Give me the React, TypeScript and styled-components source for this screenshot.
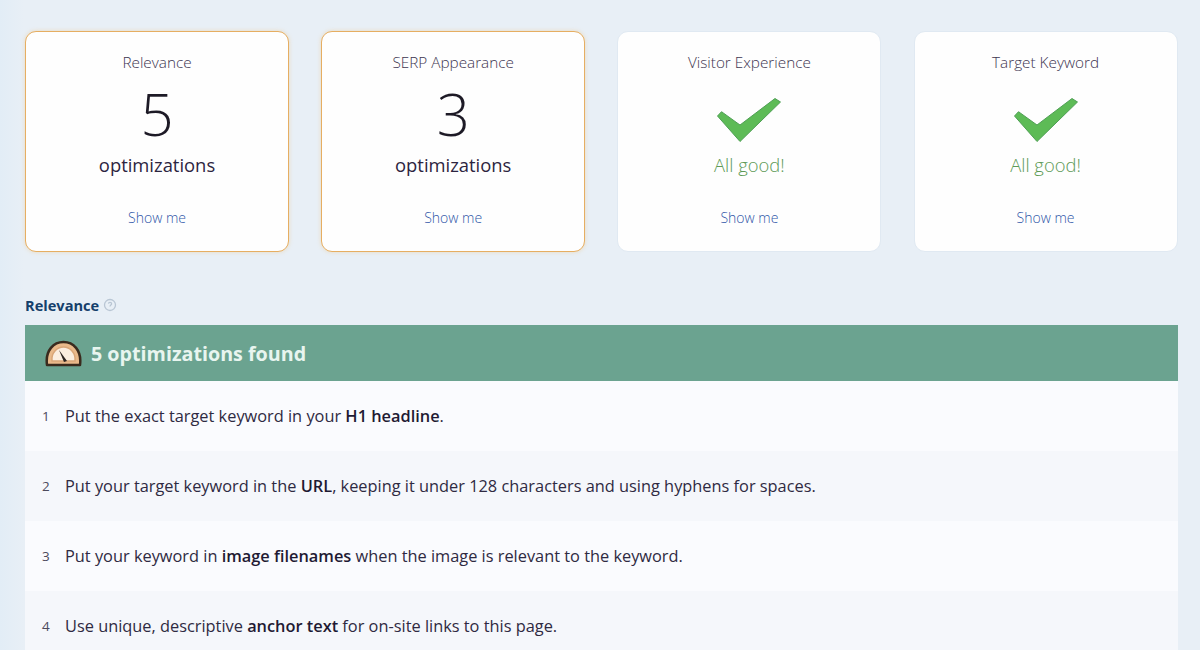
import React from "react"
import styled, { createGlobalStyle } from "styled-components"

const GlobalStyle = createGlobalStyle`
    html, body {
        margin: 0;
        padding: 0;
        height: 650px;
        overflow: hidden;
        background: linear-gradient(90deg, #e2edf6 0, #e8eff6 24px);
        font-family: "Open Sans", "Noto Sans", sans-serif;
    }
`

const Page = styled.div`
    padding: 31px 22px 0 25px;
`

const Cards = styled.div`
    display: grid;
    grid-template-columns: repeat(4, 264px);
    column-gap: 32.2px;
`

const Card = styled.div<{ $warn?: boolean }>`
    height: 221px;
    box-sizing: border-box;
    display: flex;
    flex-direction: column;
    align-items: center;
    padding-top: 21px;
    background-color: #fefefe;
    border-radius: 11px;
    border: ${(p) => (p.$warn ? "1.5px solid #e6ae62" : "1px solid #e0e9f2")};
    box-shadow: ${(p) => (p.$warn ? "0 0 4px rgba(240, 190, 110, 0.4)" : "none")};
`

const CardTitle = styled.div`
    font-size: 15.3px;
    font-weight: 300;
    line-height: 18px;
    color: #3d3550;
`

const Count = styled.div`
    font-size: 58px;
    font-weight: 300;
    line-height: 72px;
    height: 72px;
    margin-top: 7px;
    color: #1d1a26;
`

const CheckBox = styled.div`
    height: 72.5px;
    box-sizing: border-box;
    margin-top: 7px;
    padding-top: 20px;
    display: flex;
    align-items: flex-start;
    justify-content: center;
`

const Status = styled.div<{ $good?: boolean }>`
    font-size: 18.4px;
    font-weight: ${(p) => (p.$good ? 300 : 400)};
    line-height: 24px;
    margin-top: 2.5px;
    color: ${(p) => (p.$good ? "#5d9a56" : "#2c2440")};
`

const ShowMe = styled.a`
    font-size: 14px;
    font-weight: 300;
    line-height: 18px;
    margin-top: 32px;
    color: #2f56a8;
`

const SectionLabel = styled.div`
    display: flex;
    align-items: center;
    gap: 4px;
    margin-top: 44px;
    height: 18px;
    font-size: 14.6px;
    font-weight: 700;
    color: #153f6b;
`

const Banner = styled.div`
    display: flex;
    align-items: center;
    gap: 9px;
    height: 56px;
    margin-top: 11px;
    padding-left: 20px;
    background-color: #6ba390;
    font-size: 19.7px;
    font-weight: 700;
    color: #e8f5ef;
`

const Row = styled.div<{ $shade?: boolean }>`
    display: flex;
    align-items: center;
    height: 70px;
    font-size: 16.35px;
    color: #2f2a42;
    background-color: ${(p) => (p.$shade ? "#f5f7fb" : "#fafbfe")};

    b {
        font-weight: 600;
        color: #1f1a33;
    }
`

const RowNum = styled.span`
    width: 40px;
    padding-left: 17px;
    box-sizing: border-box;
    font-size: 13.5px;
    color: #4c4a5c;
`

const Check = () => (
    <svg width="64" height="44" viewBox="0 0 64 44">
        <path
            d="M0.5 18 L4.5 13.7 L23 27 L58 0.5 L63.5 4 L23 43.5 Z"
            fill="#5dbb56"
            stroke="#4f9f55"
            strokeWidth="1"
            strokeLinejoin="round"
        />
    </svg>
)

const Gauge = () => (
    <svg width="37" height="27" viewBox="0 0 37 27">
        <path d="M2 25 C0 10 9 2 18.5 2 C28 2 37 10 35 25 Z" fill="#e9b98a" stroke="#3a2b1e" strokeWidth="2.5" strokeLinejoin="round" />
        <path d="M7 21 C6 13 12 7 18.5 7 C25 7 31 13 30 21 Z" fill="#fbeee0" stroke="#d9a678" strokeWidth="1.5" />
        <path d="M14 10 L22 21 L19 22 Z" fill="#2b2320" />
    </svg>
)

const HelpIcon = () => (
    <svg width="14" height="14" viewBox="0 0 14 14" fill="none" stroke="#b9c6d4" strokeWidth="1.3">
        <circle cx="7" cy="7" r="5.5" />
        <path d="M5.4 5.6 C5.6 3.9 8.6 4 8.6 5.7 C8.6 7 7 7 7 8.4" />
    </svg>
)

const App = () => {
    return (
        <Page>
            <GlobalStyle />
            <Cards>
                <Card $warn>
                    <CardTitle>Relevance</CardTitle>
                    <Count>5</Count>
                    <Status>optimizations</Status>
                    <ShowMe>Show me</ShowMe>
                </Card>
                <Card $warn>
                    <CardTitle>SERP Appearance</CardTitle>
                    <Count>3</Count>
                    <Status>optimizations</Status>
                    <ShowMe>Show me</ShowMe>
                </Card>
                <Card>
                    <CardTitle>Visitor Experience</CardTitle>
                    <CheckBox>
                        <Check />
                    </CheckBox>
                    <Status $good>All good!</Status>
                    <ShowMe>Show me</ShowMe>
                </Card>
                <Card>
                    <CardTitle>Target Keyword</CardTitle>
                    <CheckBox>
                        <Check />
                    </CheckBox>
                    <Status $good>All good!</Status>
                    <ShowMe>Show me</ShowMe>
                </Card>
            </Cards>
            <SectionLabel>
                Relevance <HelpIcon />
            </SectionLabel>
            <Banner>
                <Gauge />5 optimizations found
            </Banner>
            <Row>
                <RowNum>1</RowNum>
                <span>
                    Put the exact target keyword in your <b>H1 headline</b>.
                </span>
            </Row>
            <Row $shade>
                <RowNum>2</RowNum>
                <span>
                    Put your target keyword in the <b>URL</b>, keeping it under 128 characters and using hyphens for spaces.
                </span>
            </Row>
            <Row>
                <RowNum>3</RowNum>
                <span>
                    Put your keyword in <b>image filenames</b> when the image is relevant to the keyword.
                </span>
            </Row>
            <Row $shade>
                <RowNum>4</RowNum>
                <span>
                    Use unique, descriptive <b>anchor text</b> for on-site links to this page.
                </span>
            </Row>
        </Page>
    )
}

export default App
